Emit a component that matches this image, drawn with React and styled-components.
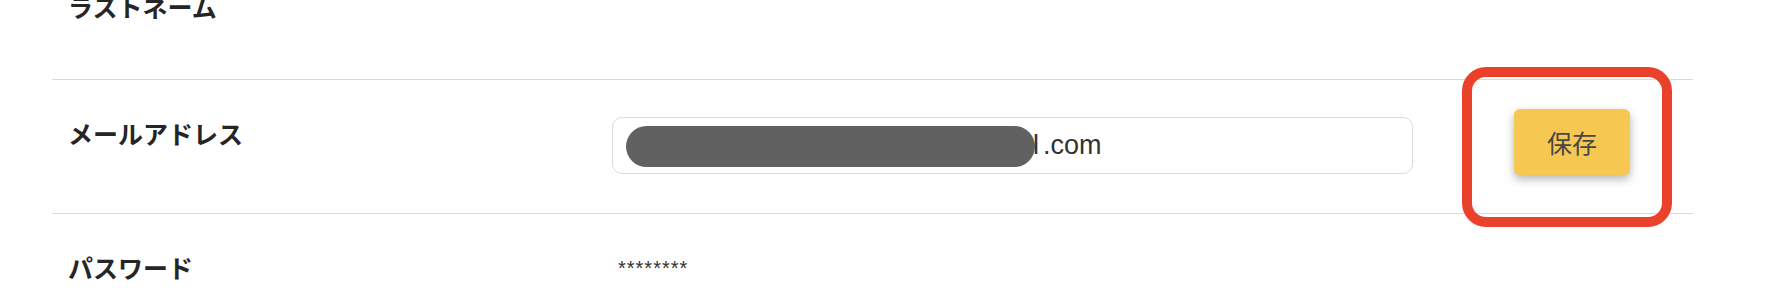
import React from "react";
import styled, { createGlobalStyle } from "styled-components";

const GlobalStyle = createGlobalStyle`
  body {
    margin: 0;
    background: #fff;
    font-family: "Noto Sans CJK JP", "Noto Sans", sans-serif;
    overflow: hidden;
  }
`;

const Page = styled.div`
  width: 1786px;
  height: 302px;
  overflow: hidden;
`;

const List = styled.div`
  margin: -47px 0 0 52px;
  width: 1641px;
`;

const Row = styled.div`
  display: grid;
  grid-template-columns: 544px 801px 1fr;
  align-items: start;
  padding: 0 63px 0 16px;
  border-bottom: 1px solid #d9d9d9;

  &:last-child {
    border-bottom: none;
  }
`;

const Label = styled.div`
  padding: 35px 0 55px;
  font-size: 25px;
  line-height: 36px;
  font-weight: 700;
  color: #252525;
`;

const Masked = styled.div`
  padding: 36px 0 0 6px;
  font-family: "Liberation Sans", Arial, sans-serif;
  font-size: 20px;
  line-height: 36px;
  letter-spacing: 1px;
  color: #333;
`;

const Input = styled.div`
  margin-top: 37px;
  height: 57px;
  box-sizing: border-box;
  border: 1px solid #dcdcdc;
  border-radius: 10px;
  padding-left: 13px;
  display: flex;
  align-items: center;
  font-family: "Liberation Sans", Arial, sans-serif;
  font-size: 27px;
  color: #333;
`;

const Redact = styled.span`
  display: inline-block;
  width: 409px;
  height: 41px;
  border-radius: 21px;
  background: #616161;
  position: relative;
  z-index: 1;
  margin: 1px -2px 0 0;
`;

const Peek = styled.span`
  margin-right: 4px;
`;

const Action = styled.div`
  justify-self: end;
  position: relative;
  margin: 29px 0 38px;
`;

const SaveButton = styled.button`
  width: 116px;
  height: 66px;
  border: none;
  border-radius: 6px;
  background: #f6c851;
  color: #474747;
  font-family: "Noto Sans CJK JP", sans-serif;
  font-size: 25px;
  box-shadow: 0 4px 10px rgba(0, 0, 0, 0.3);
  cursor: pointer;
`;

const Highlight = styled.div`
  position: absolute;
  top: -42px;
  left: -52px;
  width: 210px;
  height: 160px;
  box-sizing: border-box;
  border: 10px solid #e9412a;
  border-radius: 24px;
  pointer-events: none;
`;

export default function App() {
  return (
    <Page>
      <GlobalStyle />
      <List>
        <Row>
          <Label>ラストネーム</Label>
        </Row>
        <Row>
          <Label>メールアドレス</Label>
          <Input>
            <Redact />
            <Peek>l</Peek>
            <span>.com</span>
          </Input>
          <Action>
            <SaveButton>保存</SaveButton>
            <Highlight />
          </Action>
        </Row>
        <Row>
          <Label>パスワード</Label>
          <Masked>********</Masked>
        </Row>
      </List>
    </Page>
  );
}
